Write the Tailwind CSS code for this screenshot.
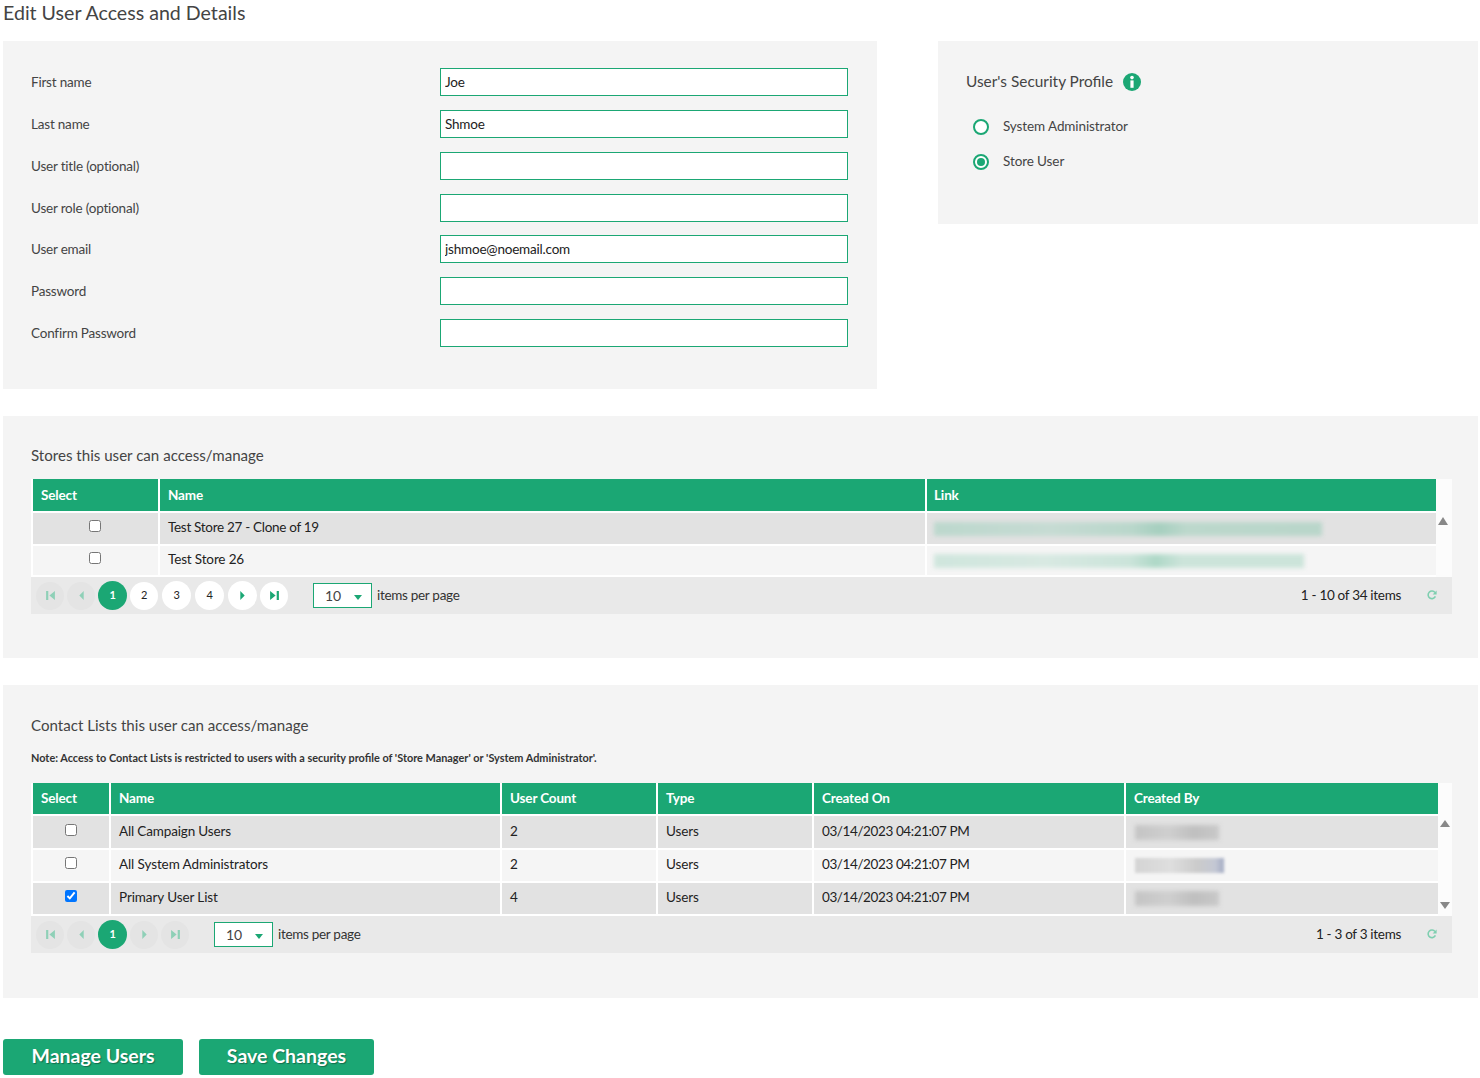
<!DOCTYPE html>
<html lang="en">
<head>
  <meta charset="UTF-8" />
  <title>Edit User Access and Details</title>
  <script src="https://cdn.jsdelivr.net/npm/@tailwindcss/browser@4"></script>
</head>
<body class="bg-white font-['Lato',sans-serif] text-[13.5px] tracking-[-0.3px] text-[#333] w-[1480px] h-[1078px] overflow-hidden">
  <h1 class="h-[41px] pl-[3px] text-[19.6px] leading-[26px] tracking-normal text-[#444]">Edit User Access and Details</h1>

  <div class="flex items-start pl-[3px] h-[348px]">
    <form class="w-[874px] h-[348px] bg-[#f4f4f4] pl-[28px] pt-[27px] flex flex-col gap-[14px] text-[#444] tracking-[-0.2px]">
      <label class="flex items-center h-[28px]"><span class="w-[409px]">First name</span><input value="Joe" class="w-[408px] h-[28px] bg-white border border-[#1ba774] px-[4px] text-[#222]" /></label>
      <label class="flex items-center h-[28px]"><span class="w-[409px]">Last name</span><input value="Shmoe" class="w-[408px] h-[28px] bg-white border border-[#1ba774] px-[4px] text-[#222]" /></label>
      <label class="flex items-center h-[28px]"><span class="w-[409px]">User title (optional)</span><input class="w-[408px] h-[28px] bg-white border border-[#1ba774] px-[4px]" /></label>
      <label class="flex items-center h-[28px]"><span class="w-[409px]">User role (optional)</span><input class="w-[408px] h-[28px] bg-white border border-[#1ba774] px-[4px]" /></label>
      <label class="flex items-center h-[28px] -mt-[1px]"><span class="w-[409px]">User email</span><input value="jshmoe@noemail.com" class="w-[408px] h-[28px] bg-white border border-[#1ba774] px-[4px] text-[#222]" /></label>
      <label class="flex items-center h-[28px]"><span class="w-[409px]">Password</span><input type="password" class="w-[408px] h-[28px] bg-white border border-[#1ba774] px-[4px]" /></label>
      <label class="flex items-center h-[28px]"><span class="w-[409px]">Confirm Password</span><input type="password" class="w-[408px] h-[28px] bg-white border border-[#1ba774] px-[4px]" /></label>
    </form>

    <div class="ml-[61px] w-[540px] h-[183px] bg-[#f4f4f4] pl-[28px] pt-[30px] text-[#444] tracking-[-0.1px]">
      <div class="flex items-center gap-[10px] h-[22px] text-[15.4px] tracking-normal">
        User's Security Profile
        <svg class="size-[18px]" viewBox="0 0 18 18"><circle cx="9" cy="9" r="9" fill="#1ba774"/><rect x="7.4" y="7.4" width="3.2" height="7.4" fill="#fff"/><circle cx="9" cy="4.6" r="1.8" fill="#fff"/></svg>
      </div>
      <div class="flex items-center mt-[22px] ml-[7px] h-[20px]">
        <span class="size-[16px] mt-[3px] rounded-full border-2 border-[#1ba774] bg-white"></span>
        <span class="ml-[14px] pt-[2px]">System Administrator</span>
      </div>
      <div class="flex items-center mt-[15px] ml-[7px] h-[20px]">
        <span class="size-[16px] mt-[3px] rounded-full border-2 border-[#1ba774] bg-white flex items-center justify-center"><span class="size-[8px] rounded-full bg-[#1ba774]"></span></span>
        <span class="ml-[14px] pt-[2px]">Store User</span>
      </div>
    </div>
  </div>

  <section class="mt-[27px] ml-[3px] w-[1475px] h-[242px] bg-[#f4f4f4] pl-[28px] pt-[29px]">
    <h2 class="text-[15.1px] leading-[21px] tracking-normal text-[#444]">Stores this user can access/manage</h2>
    <div class="mt-[13px] flex w-[1421px]">
      <table class="w-[1405px] table-fixed border-separate border-spacing-0">
        <colgroup><col class="w-[127px]" /><col class="w-[767px]" /><col /></colgroup>
        <thead>
          <tr class="h-[34px] text-white font-bold text-left tracking-[-0.15px]">
            <th class="bg-[#1ba774] border-l-2 border-b-2 border-white px-[8px]">Select</th>
            <th class="bg-[#1ba774] border-l-2 border-b-2 border-white px-[8px]">Name</th>
            <th class="bg-[#1ba774] border-l-2 border-b-2 border-white px-[7px]">Link</th>
          </tr>
        </thead>
        <tbody class="text-[#222]">
          <tr class="h-[33px] bg-[#e2e2e2]">
            <td class="border-l-2 border-b-2 border-white text-center pb-[2px] pr-[1px]"><input type="checkbox" class="size-[12px] align-[0px]" /></td>
            <td class="border-l-2 border-b-2 border-white px-[8px] pb-[2px]">Test Store 27 - Clone of 19</td>
            <td class="border-l-2 border-b-2 border-white px-[7px]"><div class="w-[388px] h-[14px] mt-[1px] bg-[linear-gradient(90deg,#bcd8cd_0%,#c6dbd3_30%,#b9d7cb_51%,#a6cfbf_58%,#bcd8cc_65%,#b9d6ca_100%)] blur-[2px]"></div></td>
          </tr>
          <tr class="h-[31px] bg-[#f5f5f5]">
            <td class="border-l-2 border-b-2 border-white text-center pb-[2px] pr-[1px]"><input type="checkbox" class="size-[12px] align-[0px]" /></td>
            <td class="border-l-2 border-b-2 border-white px-[8px] pb-[2px] tracking-[-0.15px]">Test Store 26</td>
            <td class="border-l-2 border-b-2 border-white px-[7px]"><div class="w-[370px] h-[14px] mt-[1px] bg-[linear-gradient(90deg,#cfe6dd_0%,#d8e9e2_30%,#cbe4da_53%,#aed8c7_60%,#cce4da_67%,#cce4da_100%)] blur-[2px]"></div></td>
          </tr>
        </tbody>
      </table>
      <div class="w-[16px] bg-[#fcfcfc] pt-[38px] pl-[2px]">
        <svg class="w-[10px] h-[8px]" viewBox="0 0 10 8"><path d="M5 0 10 8H0Z" fill="#888"/></svg>
      </div>
    </div>
    <div class="flex items-center w-[1421px] h-[37px] bg-[#e9e9e9] pl-[5px]">
      <span class="flex items-center justify-center size-[28px] rounded-full bg-[#e4e4e4]"><svg class="size-[11px]" viewBox="0 0 10 10"><path d="M1 1h2v8H1ZM9 1v8L4 5Z" fill="#8fd0b7"/></svg></span>
      <span class="ml-[3px] flex items-center justify-center size-[28px] rounded-full bg-[#e4e4e4]"><svg class="size-[11px]" viewBox="0 0 10 10"><path d="M7 1v8L3 5Z" fill="#8fd0b7"/></svg></span>
      <span class="ml-[3px] flex items-center justify-center size-[29px] rounded-full bg-[#1ba774] text-white text-[11px] font-bold">1</span>
      <span class="ml-[3px] flex items-center justify-center size-[28px] rounded-full bg-white text-[11px] text-[#222]">2</span>
      <span class="ml-[4px] flex items-center justify-center size-[29px] rounded-full bg-white text-[11px] text-[#222]">3</span>
      <span class="ml-[4px] flex items-center justify-center size-[29px] rounded-full bg-white text-[11px] text-[#222]">4</span>
      <span class="ml-[4px] flex items-center justify-center size-[29px] rounded-full bg-white"><svg class="size-[11px]" viewBox="0 0 10 10"><path d="M3 1v8l4-4Z" fill="#1ba774"/></svg></span>
      <span class="ml-[3px] flex items-center justify-center size-[28px] rounded-full bg-white"><svg class="size-[11px]" viewBox="0 0 10 10"><path d="M1 1v8l5-4ZM7 1h2v8H7Z" fill="#1ba774"/></svg></span>
      <span class="ml-[25px] flex items-center w-[59px] h-[25px] bg-white border border-[#1ba774] pl-[11px] text-[14px] tracking-normal text-[#444]">10<svg class="ml-[13px] mt-[3px] w-[8px] h-[5px]" viewBox="0 0 8 5"><path d="M0 0h8L4 5Z" fill="#1ba774"/></svg></span>
      <span class="ml-[5px] pb-[1px] text-[#333]">items per page</span>
      <span class="ml-auto pb-[1px] text-[#222]">1 - 10 of 34 items</span>
      <svg class="ml-[26px] mr-[15px] mb-[1px] size-[10px]" viewBox="0 0 10 10" fill="none"><path d="M8.4 6.4A3.8 3.8 0 1 1 8 2.6" stroke="#7fcfb0" stroke-width="1.6"/><path d="M9.6 .4v4h-4Z" fill="#7fcfb0"/></svg>
    </div>
  </section>

  <section class="mt-[27px] ml-[3px] w-[1475px] h-[313px] bg-[#f4f4f4] pl-[28px] pt-[29px]">
    <h2 class="text-[15.1px] leading-[22px] tracking-normal text-[#444]">Contact Lists this user can access/manage</h2>
    <p class="mt-[14px] text-[10.9px] leading-[16px] font-bold text-[#333] tracking-normal">Note: Access to Contact Lists is restricted to users with a security profile of 'Store Manager' or 'System Administrator'.</p>
    <div class="mt-[17px] flex w-[1421px]">
      <table class="w-[1407px] table-fixed border-separate border-spacing-0">
        <colgroup><col class="w-[78px]" /><col class="w-[391px]" /><col class="w-[156px]" /><col class="w-[156px]" /><col class="w-[312px]" /><col /></colgroup>
        <thead>
          <tr class="h-[33px] text-white font-bold text-left tracking-[-0.15px]">
            <th class="bg-[#1ba774] border-l-2 border-b-2 border-white px-[8px]">Select</th>
            <th class="bg-[#1ba774] border-l-2 border-b-2 border-white px-[8px]">Name</th>
            <th class="bg-[#1ba774] border-l-2 border-b-2 border-white px-[8px]">User Count</th>
            <th class="bg-[#1ba774] border-l-2 border-b-2 border-white px-[8px]">Type</th>
            <th class="bg-[#1ba774] border-l-2 border-b-2 border-white px-[8px]">Created On</th>
            <th class="bg-[#1ba774] border-l-2 border-b-2 border-white px-[8px]">Created By</th>
          </tr>
        </thead>
        <tbody class="text-[#222]">
          <tr class="h-[34px] bg-[#e2e2e2]">
            <td class="border-l-2 border-b-2 border-white text-center pb-[2px]"><input type="checkbox" class="size-[12px] align-[0px]" /></td>
            <td class="border-l-2 border-b-2 border-white px-[8px] pb-[2px] tracking-[-0.15px]">All Campaign Users</td>
            <td class="border-l-2 border-b-2 border-white px-[8px] pb-[2px]">2</td>
            <td class="border-l-2 border-b-2 border-white px-[8px] pb-[2px] tracking-[-0.1px]">Users</td>
            <td class="border-l-2 border-b-2 border-white px-[8px] pb-[2px] tracking-[-0.4px]">03/14/2023 04:21:07 PM</td>
            <td class="border-l-2 border-b-2 border-white px-[8px]"><div class="w-[84px] h-[15px] ml-[1px] bg-[linear-gradient(90deg,#c4c4c4,#cfcfcf_40%,#bfbfbf_70%,#c8c8c8)] blur-[2px]"></div></td>
          </tr>
          <tr class="h-[33px] bg-[#f5f5f5]">
            <td class="border-l-2 border-b-2 border-white text-center pb-[2px]"><input type="checkbox" class="size-[12px] align-[0px]" /></td>
            <td class="border-l-2 border-b-2 border-white px-[8px] pb-[2px] tracking-[-0.1px]">All System Administrators</td>
            <td class="border-l-2 border-b-2 border-white px-[8px] pb-[2px]">2</td>
            <td class="border-l-2 border-b-2 border-white px-[8px] pb-[2px] tracking-[-0.1px]">Users</td>
            <td class="border-l-2 border-b-2 border-white px-[8px] pb-[2px] tracking-[-0.4px]">03/14/2023 04:21:07 PM</td>
            <td class="border-l-2 border-b-2 border-white px-[8px]"><div class="w-[89px] h-[15px] ml-[1px] bg-[linear-gradient(90deg,#d4d4d4,#dedede_40%,#cbcbcb_70%,#c4c8d4_90%,#a4acc4)] blur-[1.5px]"></div></td>
          </tr>
          <tr class="h-[33px] bg-[#e2e2e2]">
            <td class="border-l-2 border-b-2 border-white text-center pb-[2px]"><input type="checkbox" checked class="size-[12px] align-[0px]" /></td>
            <td class="border-l-2 border-b-2 border-white px-[8px] pb-[2px] tracking-[-0.1px]">Primary User List</td>
            <td class="border-l-2 border-b-2 border-white px-[8px] pb-[2px]">4</td>
            <td class="border-l-2 border-b-2 border-white px-[8px] pb-[2px] tracking-[-0.1px]">Users</td>
            <td class="border-l-2 border-b-2 border-white px-[8px] pb-[2px] tracking-[-0.4px]">03/14/2023 04:21:07 PM</td>
            <td class="border-l-2 border-b-2 border-white px-[8px]"><div class="w-[84px] h-[15px] ml-[1px] bg-[linear-gradient(90deg,#c4c4c4,#cfcfcf_40%,#bfbfbf_70%,#c8c8c8)] blur-[2px]"></div></td>
          </tr>
        </tbody>
      </table>
      <div class="w-[14px] bg-[#fcfcfc] pt-[37px] pl-[2px] flex flex-col">
        <svg class="w-[10px] h-[7px]" viewBox="0 0 10 7"><path d="M5 0 10 7H0Z" fill="#888"/></svg>
        <svg class="w-[10px] h-[7px] mt-[75px]" viewBox="0 0 10 7"><path d="M0 0h10L5 7Z" fill="#888"/></svg>
      </div>
    </div>
    <div class="flex items-center w-[1421px] h-[37px] bg-[#e9e9e9] pl-[5px]">
      <span class="flex items-center justify-center size-[28px] rounded-full bg-[#e4e4e4]"><svg class="size-[11px]" viewBox="0 0 10 10"><path d="M1 1h2v8H1ZM9 1v8L4 5Z" fill="#8fd0b7"/></svg></span>
      <span class="ml-[3px] flex items-center justify-center size-[28px] rounded-full bg-[#e4e4e4]"><svg class="size-[11px]" viewBox="0 0 10 10"><path d="M7 1v8L3 5Z" fill="#8fd0b7"/></svg></span>
      <span class="ml-[3px] flex items-center justify-center size-[29px] rounded-full bg-[#1ba774] text-white text-[11px] font-bold">1</span>
      <span class="ml-[3px] flex items-center justify-center size-[28px] rounded-full bg-[#e4e4e4]"><svg class="size-[11px]" viewBox="0 0 10 10"><path d="M3 1v8l4-4Z" fill="#8fd0b7"/></svg></span>
      <span class="ml-[3px] flex items-center justify-center size-[28px] rounded-full bg-[#e4e4e4]"><svg class="size-[11px]" viewBox="0 0 10 10"><path d="M1 1v8l5-4ZM7 1h2v8H7Z" fill="#8fd0b7"/></svg></span>
      <span class="ml-[25px] flex items-center w-[59px] h-[25px] bg-white border border-[#1ba774] pl-[11px] text-[14px] tracking-normal text-[#444]">10<svg class="ml-[13px] mt-[3px] w-[8px] h-[5px]" viewBox="0 0 8 5"><path d="M0 0h8L4 5Z" fill="#1ba774"/></svg></span>
      <span class="ml-[5px] pb-[1px] text-[#333]">items per page</span>
      <span class="ml-auto pb-[1px] text-[#222]">1 - 3 of 3 items</span>
      <svg class="ml-[26px] mr-[15px] mb-[1px] size-[10px]" viewBox="0 0 10 10" fill="none"><path d="M8.4 6.4A3.8 3.8 0 1 1 8 2.6" stroke="#7fcfb0" stroke-width="1.6"/><path d="M9.6 .4v4h-4Z" fill="#7fcfb0"/></svg>
    </div>
  </section>

  <div class="mt-[41px] ml-[3px] flex gap-[16px]">
    <button class="w-[180px] h-[36px] pb-[2px] rounded-[3px] bg-[#1ba774] text-white text-[19.5px] tracking-normal font-bold [text-shadow:1px_1px_1px_rgba(0,0,0,0.35)]">Manage Users</button>
    <button class="w-[175px] h-[36px] pb-[2px] rounded-[3px] bg-[#1ba774] text-white text-[19.5px] tracking-normal font-bold [text-shadow:1px_1px_1px_rgba(0,0,0,0.35)]">Save Changes</button>
  </div>
</body>
</html>
